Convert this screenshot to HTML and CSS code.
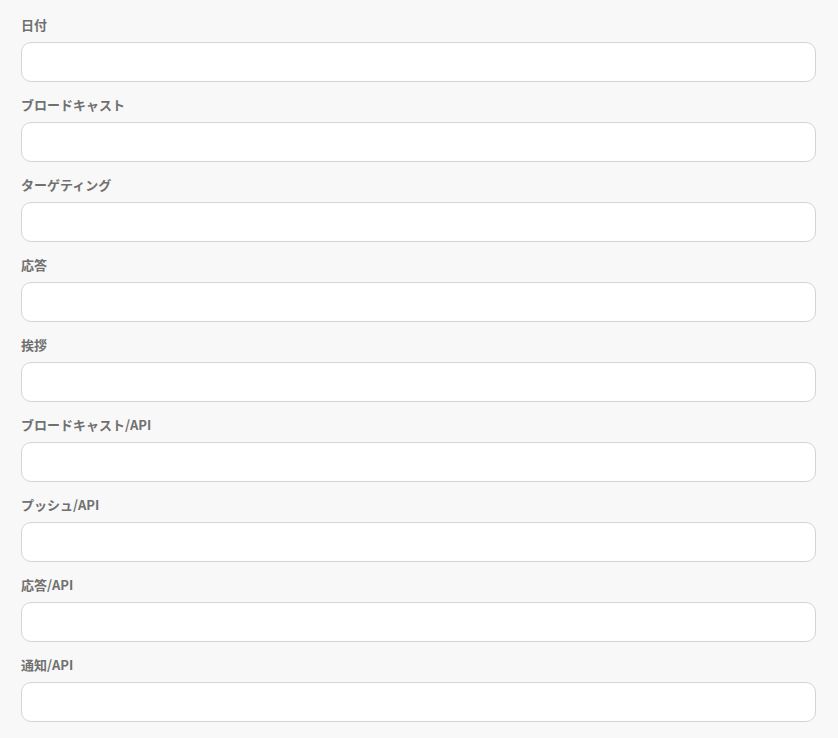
FILE: index.html
```html
<!DOCTYPE html>
<html lang="ja">
<head>
<meta charset="utf-8">
<link rel="stylesheet" href="styles.css">
</head>
<body>
<form class="form">
  <div class="field"><label class="label">日付</label><input class="input" type="text"></div>
  <div class="field"><label class="label">ブロードキャスト</label><input class="input" type="text"></div>
  <div class="field"><label class="label">ターゲティング</label><input class="input" type="text"></div>
  <div class="field"><label class="label">応答</label><input class="input" type="text"></div>
  <div class="field"><label class="label">挨拶</label><input class="input" type="text"></div>
  <div class="field"><label class="label">ブロードキャスト/API</label><input class="input" type="text"></div>
  <div class="field"><label class="label">プッシュ/API</label><input class="input" type="text"></div>
  <div class="field"><label class="label">応答/API</label><input class="input" type="text"></div>
  <div class="field"><label class="label">通知/API</label><input class="input" type="text"></div>
</form>
</body>
</html>
```
FILE: styles.css
```css
html, body {
  margin: 0;
  background: #f8f8f8;
}
body {
  font-family: "Noto Sans CJK JP", "Noto Sans", sans-serif;
}
.form {
  display: flex;
  flex-direction: column;
  gap: 15px;
  padding: 17px 22px 0 21px;
}
.field {
  display: flex;
  flex-direction: column;
  gap: 9px;
}
.label {
  font-size: 13px;
  line-height: 16px;
  font-weight: 700;
  color: #707070;
}
.input {
  box-sizing: border-box;
  height: 40px;
  width: 100%;
  margin: 0;
  border: 1px solid #d3d4da;
  border-radius: 10px;
  background: #ffffff;
  outline: none;
}
```
